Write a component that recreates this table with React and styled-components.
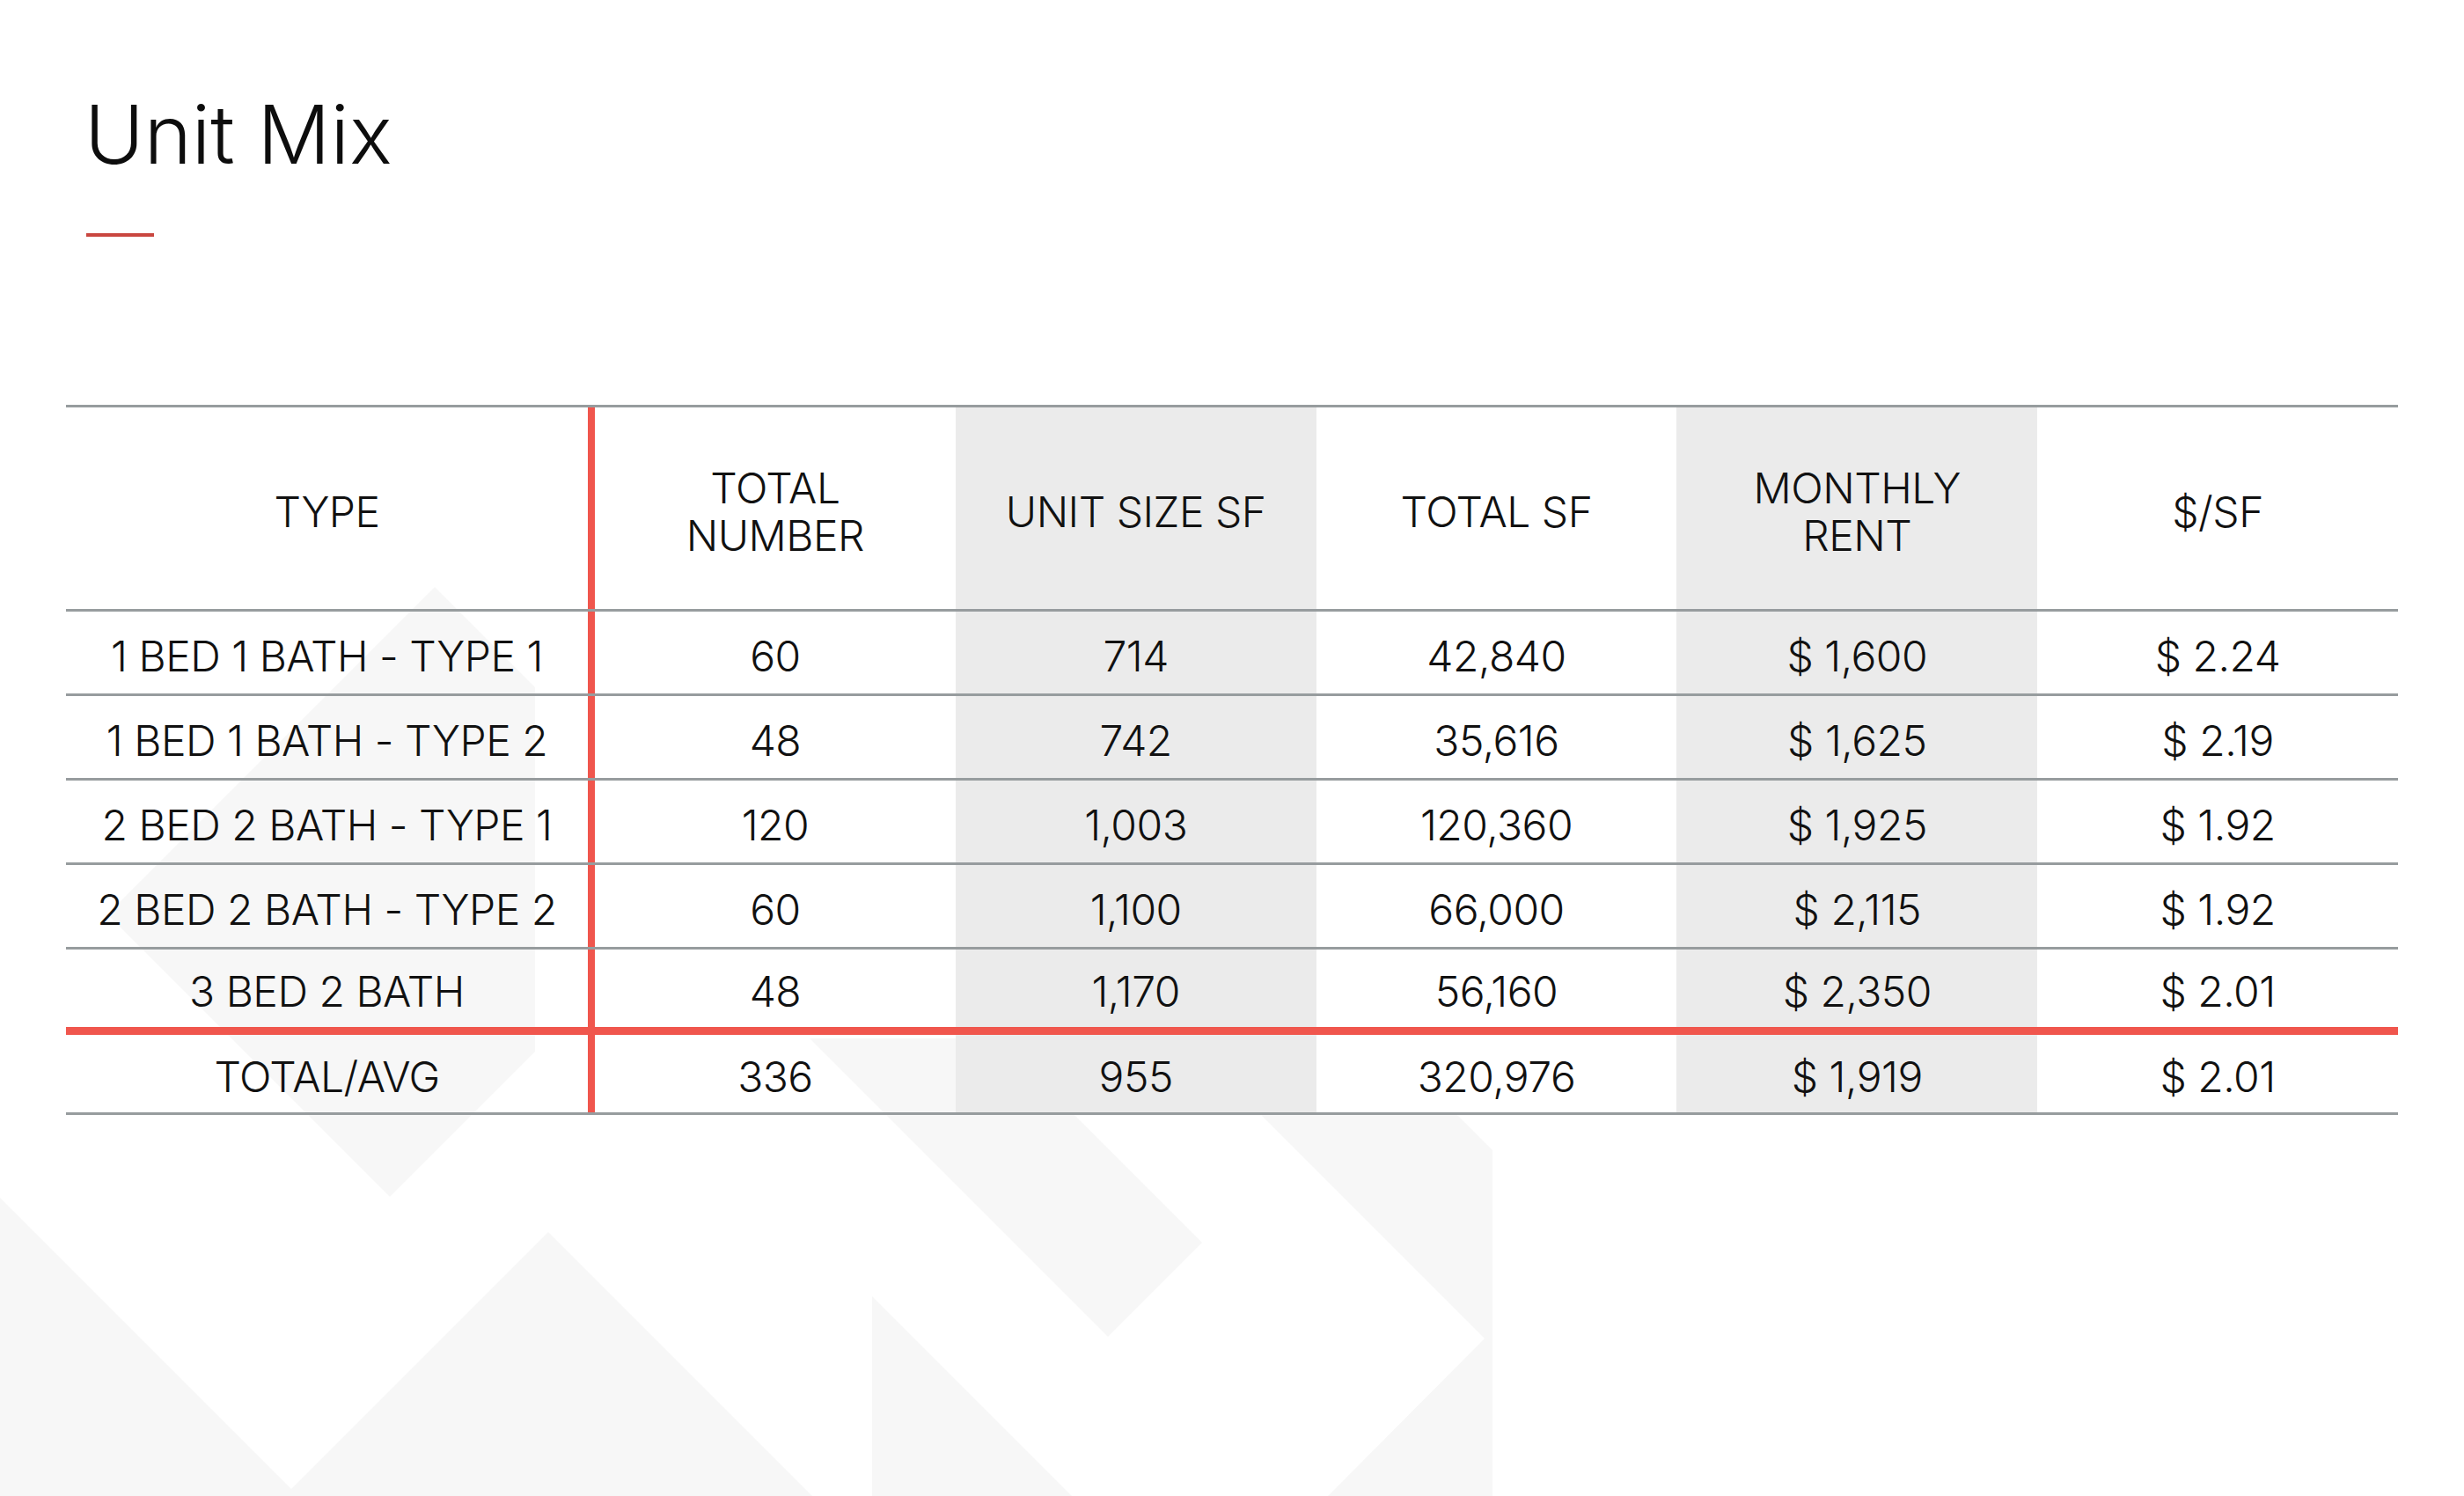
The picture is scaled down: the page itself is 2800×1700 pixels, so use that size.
import React from "react";
import styled, { createGlobalStyle } from "styled-components";

// Unit mix slide: title, red accent rule and the unit table over a faint logo mark.

const GlobalStyle = createGlobalStyle`
  * { box-sizing: border-box; }
  body {
    margin: 0;
    background: #ffffff;
    font-family: "Inter", "Liberation Sans", sans-serif;
  }
`;

const headers = ["TYPE", "TOTAL|NUMBER", "UNIT SIZE SF", "TOTAL SF", "MONTHLY|RENT", "$/SF"];

const rows = [
  ["1 BED 1 BATH - TYPE 1", "60", "714", "42,840", "$ 1,600", "$ 2.24"],
  ["1 BED 1 BATH - TYPE 2", "48", "742", "35,616", "$ 1,625", "$ 2.19"],
  ["2 BED 2 BATH - TYPE 1", "120", "1,003", "120,360", "$ 1,925", "$ 1.92"],
  ["2 BED 2 BATH - TYPE 2", "60", "1,100", "66,000", "$ 2,115", "$ 1.92"],
  ["3 BED 2 BATH", "48", "1,170", "56,160", "$ 2,350", "$ 2.01"],
];

const total = ["TOTAL/AVG", "336", "955", "320,976", "$ 1,919", "$ 2.01"];

// the shaded columns
const isShaded = (i) => i === 2 || i === 4;

const Watermark = () => (
  <MarkSvg viewBox="0 0 2800 1700" width="2800" height="1700">
    <g fill="#f7f7f7">
      <polygon points="494,667 608,781 608,1195 443,1360 122,1039" />
      <polygon points="0,1361 339,1700 0,1700" />
      <polygon points="623,1400 923,1700 323,1700" />
      <polygon points="991,1473 1218,1700 991,1700" />
      <polygon points="920,1180 1134,1180 1366,1412 1259,1519" />
      <polygon points="1433,1267 1656,1267 1696,1307 1696,1700 1509,1700 1687,1521" />
    </g>
  </MarkSvg>
);

const App = () => {
  return (
    <Page>
      <GlobalStyle />
      <Watermark />
      <Content>
        <Title>Unit Mix</Title>
        <Accent />

        <Table>
          <Row $height={232}>
            {headers.map((h, i) => (
              <Cell key={h} $first={i === 0} $shaded={isShaded(i)}>
                <span>
                  {h.split("|").map((line, j) => (
                    <React.Fragment key={line}>
                      {j > 0 && <br />}
                      {line}
                    </React.Fragment>
                  ))}
                </span>
              </Cell>
            ))}
          </Row>

          {rows.map((row, r) => {
            const last = r === rows.length - 1;
            return (
              <Row key={row[0]} $height={last ? 97 : 96} $accent={last}>
                {row.map((v, i) => (
                  <Cell key={i} $first={i === 0} $shaded={isShaded(i)}>
                    {v}
                  </Cell>
                ))}
              </Row>
            );
          })}

          <Row $height={91}>
            {total.map((v, i) => (
              <Cell key={i} $first={i === 0} $shaded={isShaded(i)}>
                {v}
              </Cell>
            ))}
          </Row>
        </Table>
      </Content>
    </Page>
  );
};

const Page = styled.div`
  position: relative;
  width: 2800px;
  height: 1700px;
  overflow: hidden;
  background: #ffffff;
`;

const MarkSvg = styled.svg`
  position: absolute;
  top: 0;
  left: 0;
  z-index: 0;
`;

const Content = styled.div`
  position: relative;
  z-index: 1;
  display: flex;
  flex-direction: column;
  padding-top: 108px;
`;

const Title = styled.h1`
  margin: 0 0 0 96px;
  font-size: 92px;
  line-height: 90px;
  font-weight: 300;
  color: #0d0d0d;
  letter-spacing: 0;
`;

const Accent = styled.div`
  width: 77px;
  height: 4px;
  margin: 67px 0 0 98px;
  background: #c9463f;
`;

const Table = styled.div`
  width: 2650px;
  margin: 191px 0 0 75px;
  border-top: 3px solid #979c9e;
`;

const Row = styled.div`
  display: grid;
  grid-template-columns: 601px repeat(5, 1fr);
  height: ${(p) => p.$height}px;
  border-bottom: ${(p) => (p.$accent ? "9px solid #f0564d" : "3px solid #979c9e")};
`;

const Cell = styled.div`
  display: flex;
  align-items: center;
  justify-content: center;
  padding-top: 8px;
  text-align: center;
  font-size: 48px;
  line-height: 54px;
  font-weight: 300;
  color: #111111;
  letter-spacing: -0.5px;
  white-space: nowrap;
  background: ${(p) => (p.$shaded ? "#ebebeb" : "transparent")};
  border-right: ${(p) => (p.$first ? "8px solid #f0564d" : "none")};
`;

export default App;
